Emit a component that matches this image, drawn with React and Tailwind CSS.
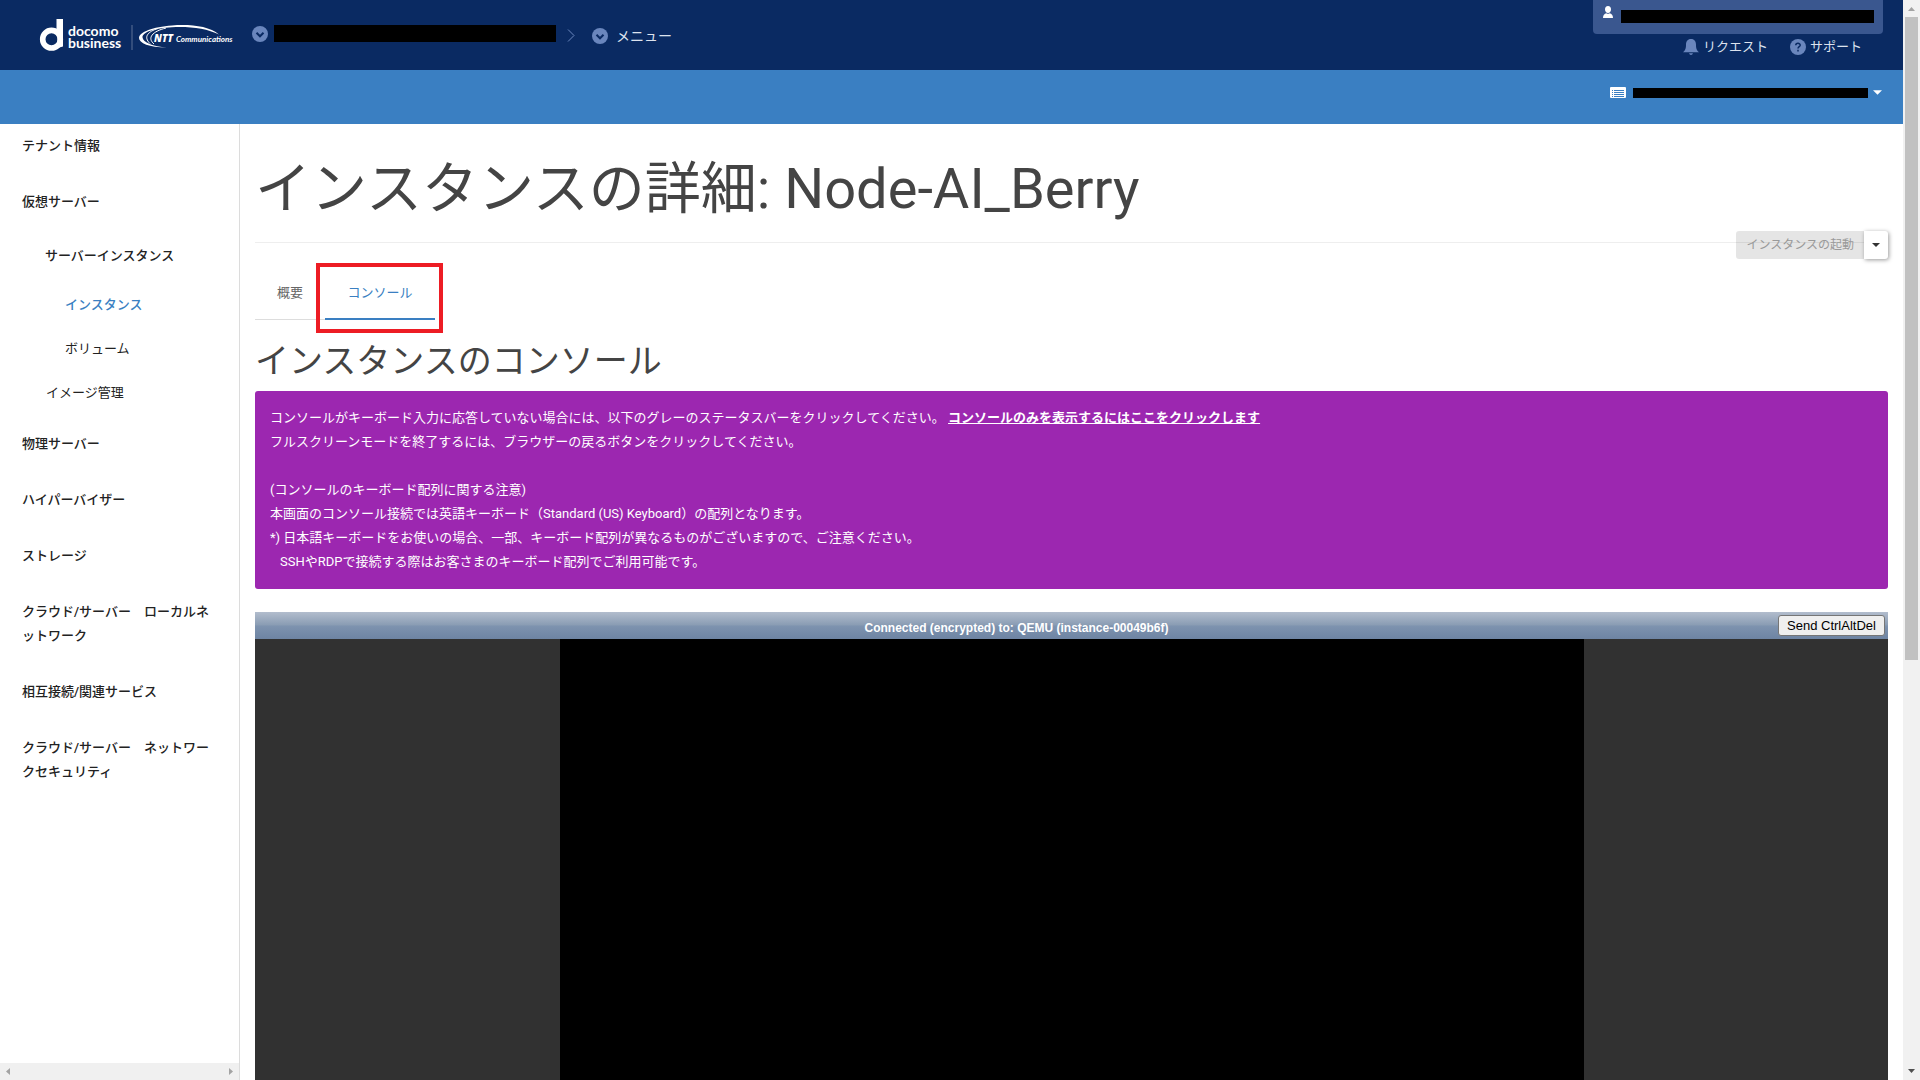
const sideItems = [
  { label: "物理サーバー" },
  { label: "ハイパーバイザー" },
  { label: "ストレージ" },
  { label: "クラウド/サーバー　ローカルネットワーク" },
  { label: "相互接続/関連サービス" },
  { label: "クラウド/サーバー　ネットワークセキュリティ" },
];

function Logo() {
  return (
    <svg width="200" height="36" viewBox="36 16 200 36" fill="#fff" role="img" aria-label="docomo business NTT Communications">
      <circle cx="51.5" cy="39.2" r="8.8" fill="none" stroke="#fff" strokeWidth="5.6" />
      <path d="M56.500 19H63V46.500L57.500 48V35L56.500 31Z" />
      <text fontSize="14" fontWeight="700" fontFamily="Lato, sans-serif">
        <tspan x="68" y="36">docomo</tspan>
        <tspan x="68" y="48">business</tspan>
      </text>
      <path d="M131.500 25h1v25h-1z" fill="#5c7196" />
      <path d="M219 34.500C209 26 190 24.200 172 25.500C153 27 139 32 139 38C139 43 149 47.500 167 47.600C153 46.500 143 42.500 142.500 37.500C142 32 155 28 172 27.200C190 26.300 207 28.500 219 34.500Z" />
      <path d="M158 28.500C148 31.500 143 37 150 43.500M166 28C152 31.500 147 38 154 44" fill="none" stroke="#fff" strokeWidth="1" />
      <text x="154" y="42" fontSize="10" fontWeight="800" fontStyle="italic" fontFamily="'Open Sans', sans-serif">NTT</text>
      <text x="176" y="42" fontSize="8" fontWeight="700" fontStyle="italic" fontFamily="Lato, sans-serif">Communications</text>
    </svg>
  );
}

function CircleChevron() {
  return (
    <svg className="size-4 shrink-0" viewBox="0 0 16 16">
      <circle cx="8" cy="8" r="8" fill="#6a86bd" />
      <path d="M4.500 6.800 8 10.300 11.500 6.800" fill="none" stroke="#0a2a62" strokeWidth="2" />
    </svg>
  );
}

function Caret({ className }) {
  return (
    <svg className={className} viewBox="0 0 10 5" fill="currentColor">
      <path d="M0 0h10L5 5z" />
    </svg>
  );
}

function Header() {
  return (
    <header className="flex h-[70px] shrink-0 justify-between bg-[#0a2a62] text-sm text-[#dde3ee]">
      <div className="flex items-start pl-9">
        <a href="#" className="mt-4">
          <Logo />
        </a>
        <button className="mt-[25px] ml-4 flex items-center gap-1.5" aria-label="テナント">
          <CircleChevron />
          <span className="h-[17px] w-[282px] bg-black" />
        </button>
        <svg className="mt-[29px] ml-[11px] h-[13px] w-2" viewBox="0 0 8 13" fill="none" stroke="#6a86bd">
          <path d="M1 .5 7 6.500 1 12.500" />
        </svg>
        <button className="mt-[26px] ml-[17px] flex items-center gap-2">
          <CircleChevron />
          メニュー
        </button>
      </div>
      <div className="mr-5 flex flex-col">
        <button className="flex h-[34px] w-[290px] items-start rounded-b bg-[#3a578f] pl-2.5" aria-label="ユーザー">
          <svg className="mt-1.5 h-3 w-2.5" viewBox="0 0 10 12" fill="#fff">
            <path d="M5 0C7 0 8 1.300 8 3.200S7 7 5 7 2 5.100 2 3.200 3 0 5 0ZM0 12C0 9 1.500 7.800 3.300 7.300Q5 8.300 6.700 7.300C8.500 7.800 10 9 10 12Z" />
          </svg>
          <span className="mt-2.5 ml-2 h-[13px] w-[253px] bg-black" />
        </button>
        <div className="mt-1 flex justify-end gap-[22px] pr-[21px] text-[13px]">
          <a href="#" className="flex items-center gap-1">
            <svg className="size-4" viewBox="0 0 16 16" fill="#6a86bd">
              <path d="M8 0C11.500 0 13 2.500 13 5.500C13 9.500 13.500 11 16 13.200H0C2.500 11 3 9.500 3 5.500C3 2.500 4.500 0 8 0ZM6 14.200h4Q9.500 16 8 16T6 14.200Z" />
            </svg>
            リクエスト
          </a>
          <a href="#" className="flex items-center gap-1">
            <svg className="size-4" viewBox="0 0 16 16">
              <circle cx="8" cy="8" r="8" fill="#6a86bd" />
              <path d="M5.800 6.300C5.800 3.700 10.200 3.700 10.200 6.200C10.200 7.700 8 7.700 8 9.500M8 10.800v1.700" fill="none" stroke="#0a2a62" strokeWidth="1.500" />
            </svg>
            サポート
          </a>
        </div>
      </div>
    </header>
  );
}

function SubHeader() {
  return (
    <div className="flex h-[54px] shrink-0 justify-end bg-[#3a7fc2] pr-[21px] text-white">
      <button className="mt-4 flex h-3 items-center" aria-label="プロジェクト">
        <svg className="h-[11px] w-4" viewBox="0 0 16 11">
          <rect width="16" height="11" rx="1" fill="#fff" />
          <path d="M2 3.500h1M4 3.500h10M2 5.500h1M4 5.500h10M2 7.500h1M4 7.500h10M2 9.500h1M4 9.500h10" stroke="#3a7fc2" />
        </svg>
        <span className="mt-0.5 ml-[7px] h-2.5 w-[235px] bg-black" />
        <Caret className="ml-[5px] h-[5px] w-[9px]" />
      </button>
    </div>
  );
}

function Sidebar() {
  return (
    <aside className="flex w-60 shrink-0 flex-col border-r border-[#dcdcdc]">
      <nav className="flex grow flex-col overflow-hidden px-[22px] pt-2.5 text-[13px] leading-6 font-medium break-all text-[#222]">
        <a href="#">テナント情報</a>
        <a href="#" className="mt-8">仮想サーバー</a>
        <a href="#" className="mt-[30px] pl-[23px]">サーバーインスタンス</a>
        <a href="#" className="mt-[25px] pl-[43px] text-[#3a7fc2]">インスタンス</a>
        <a href="#" className="mt-5 pl-[43px] font-normal">ボリューム</a>
        <a href="#" className="mt-5 pl-6 font-normal">イメージ管理</a>
        <div className="mt-[27px] flex flex-col gap-8">
          {sideItems.map((item) => (
            <a href="#" key={item.label}>{item.label}</a>
          ))}
        </div>
      </nav>
      <div className="flex h-[17px] shrink-0 items-center justify-between bg-[#f0f0f0] px-1.5 text-[#a3a3a3]">
        <svg className="h-[7px] w-1" viewBox="0 0 4 7" fill="currentColor"><path d="M4 0v7L0 3.500z" /></svg>
        <svg className="h-[7px] w-1" viewBox="0 0 4 7" fill="currentColor"><path d="M0 0v7l4-3.500z" /></svg>
      </div>
    </aside>
  );
}

function Notice() {
  return (
    <div className="rounded-[3px] bg-[#9c27b0] p-[15px] text-[13px] leading-6 text-white">
      <p>
        コンソールがキーボード入力に応答していない場合には、以下のグレーのステータスバーをクリックしてください。{" "}
        <a href="#" className="font-bold underline">コンソールのみを表示するにはここをクリックします</a>
      </p>
      <p>フルスクリーンモードを終了するには、ブラウザーの戻るボタンをクリックしてください。</p>
      <br />
      <p>(コンソールのキーボード配列に関する注意)</p>
      <p>本画面のコンソール接続では英語キーボード（Standard (US) Keyboard）の配列となります。</p>
      <p>*) 日本語キーボードをお使いの場合、一部、キーボード配列が異なるものがございますので、ご注意ください。</p>
      <p className="pl-2.5">SSHやRDPで接続する際はお客さまのキーボード配列でご利用可能です。</p>
    </div>
  );
}

function Console() {
  return (
    <section className="mt-[23px] flex grow flex-col bg-[#313131]">
      <div className="flex h-[27px] shrink-0 items-center bg-[linear-gradient(#b2bdcd_0%,#899cb3_49%,#7e93af_51%,#6e84a3_100%)] pr-[3px] font-['Liberation_Sans',sans-serif]">
        <div className="grow pt-1 text-center text-xs font-bold text-white">
          Connected (encrypted) to: QEMU (instance-00049b6f)
        </div>
        <button className="h-[21px] w-[107px] rounded-[3px] border border-[#767676] bg-[#efefef] text-[13px] leading-none text-black">
          Send CtrlAltDel
        </button>
      </div>
      <div className="mx-auto w-full max-w-5xl grow bg-black" />
    </section>
  );
}

export default function App() {
  return (
    <div lang="ja" className="flex h-screen overflow-hidden bg-white font-['Roboto','Noto_Sans_CJK_JP',sans-serif]">
      <div className="flex min-w-0 grow flex-col">
        <Header />
        <SubHeader />
        <div className="flex min-h-0 grow">
          <Sidebar />
          <main className="flex min-w-0 grow flex-col px-[15px] text-[#444]">
            <h1 className="mt-[29px] text-[56px] leading-[72px]">インスタンスの詳細: Node-AI_Berry</h1>
            <div className="relative mt-[17px] border-t border-[#eee]">
              <div className="absolute -top-3 right-0 flex">
                <button disabled className="h-7 rounded-l-[3px] bg-black/10 px-2.5 text-xs text-[#999]">
                  インスタンスの起動
                </button>
                <button className="flex h-7 w-6 items-center justify-center rounded-r-[3px] bg-white text-[#333] shadow-[1px_1px_4px_rgba(0,0,0,0.4)]" aria-label="その他の操作">
                  <Caret className="h-1 w-2" />
                </button>
              </div>
            </div>
            <div className="mt-[22px] flex text-[13px]">
              <button className="h-[55px] w-[70px] border-b border-[#ddd] pt-0.5 text-[#666]">概要</button>
              <div className="relative">
                <button className="h-[55px] w-[110px] border-b-2 border-[#3a7fc2] pt-0.5 text-[#3a7fc2]">コンソール</button>
                <div className="pointer-events-none absolute -top-0.5 -right-2 -bottom-[13px] -left-[9px] border-4 border-[#ed1c24]" />
              </div>
            </div>
            <h2 className="mt-5 mb-2 text-[34px] leading-[43px]">インスタンスのコンソール</h2>
            <Notice />
            <Console />
          </main>
        </div>
      </div>
      <div className="flex w-[17px] shrink-0 flex-col items-center bg-[#f1f1f1]">
        <svg className="mt-[7px] h-1 w-[7px]" viewBox="0 0 7 4" fill="#a3a3a3"><path d="M0 4h7L3.500 0z" /></svg>
        <div className="mt-1.5 h-[643px] w-[13px] bg-[#c1c1c1]" />
        <svg className="mt-auto mb-[7px] h-1 w-[7px]" viewBox="0 0 7 4" fill="#505050"><path d="M0 0h7L3.500 4z" /></svg>
      </div>
    </div>
  );
}
